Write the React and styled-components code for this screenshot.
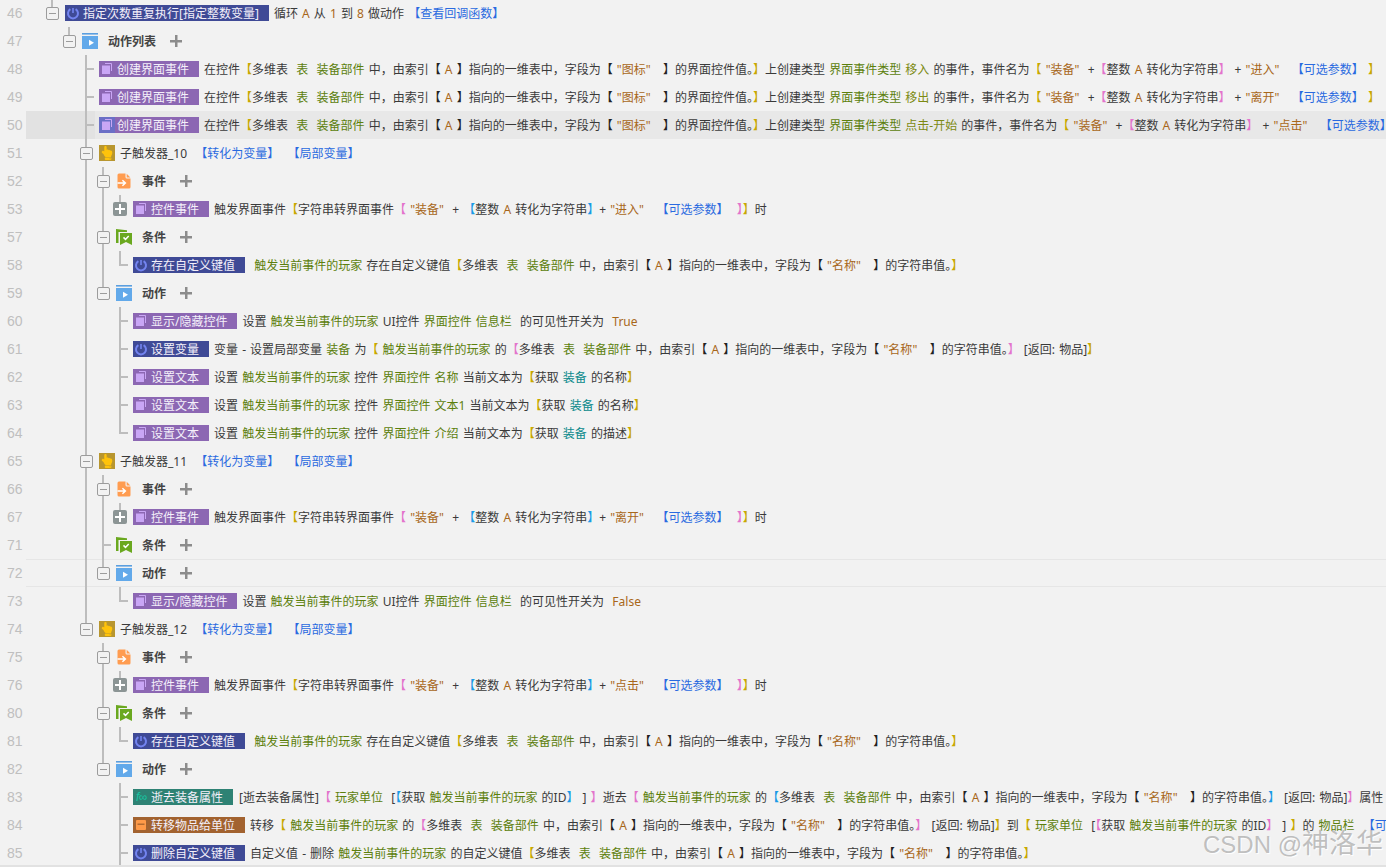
import React from "react";
import styled, { createGlobalStyle } from "styled-components";
import { FaHandPointUp } from "react-icons/fa";

const GlobalStyle = createGlobalStyle`
  html, body {
    margin: 0;
    padding: 0;
    background: #f2f2f2;
    overflow: hidden;
  }
`;

const EVENT_NAME = { in: "进入", out: "离开", click: "点击" };

const App = () => {
  return (
    <Page>
      <GlobalStyle />
      <List>
        {ROWS.map((row) => (
          <Row key={row.n}>
            <LineNo>{row.n}</LineNo>
            <Body $selected={row.selected} $lined={row.lined}>
              <Lead $selected={row.selected}>
                {row.tree.split("").map((type, i) => (
                  <TreeCell key={i} type={type} />
                ))}
              </Lead>
              <Content>{row.node}</Content>
            </Body>
          </Row>
        ))}
      </List>
      <ScrollStrip />
      <Watermark>
        CSDN @<WatermarkName>神洛华</WatermarkName>
      </Watermark>
    </Page>
  );
};

export default App;

const TreeCell = ({ type }) => (
  <Cell $type={type}>
    {(type === "m" || type === "n") && <Minus />}
    {type === "p" && <PlusBox />}
  </Cell>
);

const PurpleIcon = () => (
  <svg width="16" height="16" viewBox="0 0 16 16">
    <path d="M6 2.5h6.5V10" fill="none" stroke="#c9a6f5" strokeWidth="1" />
    <rect x="3" y="4.5" width="8" height="8.5" fill="#c9a6f5" />
  </svg>
);

const BlueIcon = () => (
  <svg width="16" height="16" viewBox="0 0 16 16">
    <path d="M5.4 4.2a5 5 0 1 0 5.2 0" fill="none" stroke="#7384f0" strokeWidth="2" />
    <path d="M8 3v5" stroke="#7384f0" strokeWidth="1.6" />
  </svg>
);

const BoxIcon = () => (
  <svg width="16" height="16" viewBox="0 0 16 16">
    <rect x="3" y="3" width="10" height="10" rx="1" fill="#ff9a48" />
    <path d="M4.5 7.2h7" stroke="#a0602c" strokeWidth="1.2" />
  </svg>
);

const DocIcon = () => (
  <svg width="16" height="16" viewBox="0 0 16 16">
    <path d="M3 .5h6.5V4a1.5 1.5 0 0 0 1.5 1.5h3.5V14a1.5 1.5 0 0 1-1.5 1.5H3A1.5 1.5 0 0 1 1.5 14V2A1.5 1.5 0 0 1 3 .5z" fill="#ff9c50" />
    <path d="M10.7.8l3.6 3.6h-3.6z" fill="#ff9c50" />
    <path d="M1.5 10h7.2M6.4 7.2L9.4 10l-3 2.8" fill="none" stroke="#fff" strokeWidth="1.5" />
  </svg>
);

const FlagIcon = () => (
  <svg width="16" height="16" viewBox="0 0 16 16">
    <path d="M0 0l11 1.2V3H2.5v11H0z" fill="#6aa81f" />
    <path d="M4 4h12v12l-6-3-6 3z" fill="#6aa81f" />
    <path d="M7.5 8.4l2 2 3.2-3.4" fill="none" stroke="#fff" strokeWidth="1.5" />
  </svg>
);

const PlayIcon = () => (
  <svg width="16" height="16" viewBox="0 0 16 16">
    <rect x="0" y="0" width="16" height="1.6" fill="#5b9fe0" />
    <rect x="0" y="3" width="16" height="13" fill="#62a9ea" />
    <path d="M7 6.8l5 3-5 3z" fill="#fff" />
  </svg>
);

const HandIcon = () => (
  <HandBox>
    <FaHandPointUp size={14} color="#ffc30b" />
  </HandBox>
);

const TAG_COLORS = {
  purple: "#8c67b3",
  blue: "#3f4a96",
  teal: "#2e8274",
  brown: "#a2622f",
};

const Tag = ({ color, children, active }) => (
  <TagBox $color={color}>
    <TagIcon $active={active}>
      {color === "purple" && <PurpleIcon />}
      {color === "blue" && <BlueIcon />}
      {color === "teal" && <FxGlyph>f∞</FxGlyph>}
      {color === "brown" && <BoxIcon />}
    </TagIcon>
    {children}
  </TagBox>
);

const Heading = ({ icon, children }) => (
  <>
    {icon}
    <HeadLabel>{children}</HeadLabel>
    <AddButton />
  </>
);

const Trigger = ({ children }) => (
  <>
    <HandIcon />
    <Text>
      {children}  <Link>【转化为变量】</Link>  <Link>【局部变量】</Link>
    </Text>
  </>
);

const TableField = ({ name, value }) => (
  <>
    多维表  <Green>表</Green>  <Green>装备部件</Green> 中，由索引<Dark>【</Dark> <Str>A</Str> <Dark>】</Dark>指向的一维表中，字段为<Dark>【</Dark> <Str>"{name}"</Str>   <Dark>】</Dark>的{value}。
  </>
);

const IntToStr = () => (
  <>
    <Cyan>【</Cyan>整数 <Str>A</Str> 转化为字符串<Cyan>】</Cyan>
  </>
);

const CreateEvent = ({ type, name, active }) => (
  <>
    <Tag color="purple" active={active}>创建界面事件</Tag>
    <Text>
      在控件<Yellow>【</Yellow><TableField name="图标" value="界面控件值" /><Yellow>】</Yellow>上创建类型 <Green>界面事件类型</Green> <Olive>{type}</Olive> 的事件，事件名为<Yellow>【</Yellow> <Str>"装备"</Str>  +<Pink>【</Pink>整数 <Str>A</Str> 转化为字符串<Pink>】</Pink> + <Str>"{name}"</Str>   <Link>【可选参数】</Link> <Yellow>】</Yellow>
    </Text>
  </>
);

const FireEvent = ({ name }) => (
  <>
    <Tag color="purple">控件事件</Tag>
    <Text>
      触发界面事件<Yellow>【</Yellow>字符串转界面事件<Pink>【</Pink> <Str>"装备"</Str>  + <IntToStr />+ <Str>"{name}"</Str>   <Link>【可选参数】</Link>  <Pink>】</Pink><Yellow>】</Yellow>时
    </Text>
  </>
);

const HasKey = () => (
  <>
    <Tag color="blue">存在自定义键值</Tag>
    <Text>
      {" "}<Green>触发当前事件的玩家</Green> 存在自定义键值<Yellow>【</Yellow><TableField name="名称" value="字符串值" /><Yellow>】</Yellow>
    </Text>
  </>
);

const ShowHide = ({ value }) => (
  <>
    <Tag color="purple">显示/隐藏控件</Tag>
    <Text>
      设置 <Green>触发当前事件的玩家</Green> UI控件 <Green>界面控件</Green> <Green>信息栏</Green>  的可见性开关为  <Str>{value}</Str>
    </Text>
  </>
);

const SetText = ({ part, what }) => (
  <>
    <Tag color="purple">设置文本</Tag>
    <Text>
      设置 <Green>触发当前事件的玩家</Green> 控件 <Green>界面控件</Green> <Green>{part}</Green> 当前文本为<Yellow>【</Yellow>获取 <Teal>装备</Teal> 的{what}<Yellow>】</Yellow>
    </Text>
  </>
);

// Styled Components
const FONT = `"Noto Sans", "Noto Sans CJK SC", sans-serif`;
const LINE = "#bdbdbd";

const Page = styled.div`
  position: relative;
  width: 100%;
  height: 100vh;
  overflow: hidden;
  background: #f2f2f2;
  font-family: ${FONT};
  font-size: 12px;
  color: #3a3a3a;
`;

const List = styled.div`
  display: flex;
  flex-direction: column;
  margin-top: -1px;
`;

const Row = styled.div`
  display: flex;
  height: 28px;
  flex: none;
`;

const LineNo = styled.div`
  width: 19px;
  padding-left: 7px;
  flex: none;
  line-height: 28px;
  font-family: "Liberation Sans", sans-serif;
  font-size: 14px;
  color: #bfbfbf;
`;

const Body = styled.div`
  display: flex;
  flex: 1;
  min-width: 0;
  background: ${(p) => (p.$selected ? "#e8e8e8" : "transparent")};
  box-shadow: ${(p) => (p.$lined ? "inset 0 1px #e6e6e6, inset 0 -1px #e6e6e6" : "none")};
`;

const Lead = styled.div`
  display: flex;
  flex: none;
  padding-left: 18px;
  background: ${(p) => (p.$selected ? "#e2e2e2" : "transparent")};
`;

const vertical = (size, pos = "0") =>
  `linear-gradient(${LINE}, ${LINE}) no-repeat 7px ${pos} / 2px ${size}`;

const CELL_LINES = {
  "|": vertical("100%"),
  T: `${vertical("100%")}, linear-gradient(${LINE}, ${LINE}) no-repeat 9px 13px / 7px 2px`,
  L: `${vertical("15px")}, linear-gradient(${LINE}, ${LINE}) no-repeat 9px 13px / 7px 2px`,
  m: vertical("100%"),
  n: vertical("14px"),
  p: vertical("14px"),
};

const Cell = styled.div`
  display: flex;
  align-items: center;
  width: 17px;
  height: 28px;
  flex: none;
  background: ${(p) => CELL_LINES[p.$type] || "none"};
`;

const Minus = styled.span`
  display: block;
  box-sizing: border-box;
  width: 13px;
  height: 13px;
  margin-left: 2px;
  border: 1px solid #9c9c9c;
  border-radius: 2px;
  background: linear-gradient(#9c9c9c, #9c9c9c) no-repeat center / 7px 1px, #f2f2f2;
`;

const PlusBox = styled.span`
  display: block;
  width: 14px;
  height: 14px;
  margin-left: 1px;
  border-radius: 2px;
  background:
    linear-gradient(#fff, #fff) no-repeat center / 10px 2px,
    linear-gradient(#fff, #fff) no-repeat center / 2px 10px,
    #8c9595;
`;

const Content = styled.div`
  display: flex;
  align-items: center;
  flex: 1;
  min-width: 0;
  padding-left: 4px;
  overflow: hidden;
  white-space: pre;
  word-spacing: 1px;
`;

const TagBox = styled.div`
  display: flex;
  align-items: flex-start;
  flex: none;
  height: 16px;
  padding-right: 10px;
  background: ${(p) => TAG_COLORS[p.$color]};
  color: #f4f0fa;
  line-height: 18px;
`;

const TagIcon = styled.span`
  display: flex;
  align-items: center;
  justify-content: center;
  width: 16px;
  height: 16px;
  margin-right: 2px;
  overflow: hidden;
  background: ${(p) => (p.$active ? "#6b6fc6" : "transparent")};
`;

const FxGlyph = styled.span`
  font-family: "Liberation Sans", "DejaVu Sans", sans-serif;
  font-size: 12px;
  font-style: italic;
  line-height: 16px;
  letter-spacing: -1px;
  color: #17c4a2;
`;

const Text = styled.div`
  flex: none;
  margin-left: ${(p) => p.$gap || "5px"};
  padding-top: 2px;
  line-height: 16px;
`;

const HeadLabel = styled.span`
  margin-left: 10px;
  padding-top: 2px;
  font-weight: 700;
  color: #444;
  line-height: 16px;
`;

const AddButton = styled.span`
  display: block;
  width: 12px;
  height: 12px;
  margin-left: 14px;
  background:
    linear-gradient(#8c8c8c, #8c8c8c) no-repeat center / 12px 2.5px,
    linear-gradient(#8c8c8c, #8c8c8c) no-repeat center / 2.5px 12px;
`;

const HandBox = styled.span`
  display: flex;
  align-items: center;
  justify-content: center;
  width: 16px;
  height: 16px;
  background: #b8962f;
`;

const Green = styled.span`
  color: #5c7f0c;
`;

const Olive = styled.span`
  color: #7c8a12;
`;

const Teal = styled.span`
  color: #0a8a8c;
`;

const Str = styled.span`
  color: #a8671a;
`;

const Link = styled.span`
  color: #2a6ae0;
`;

const Yellow = styled.span`
  color: #c8a800;
`;

const Pink = styled.span`
  color: #e374cc;
`;

const Cyan = styled.span`
  color: #1a9be6;
`;

const Dark = styled.span`
  color: #222;
`;

const ScrollStrip = styled.div`
  position: absolute;
  left: 0;
  right: 0;
  bottom: 0;
  height: 2px;
  background: #e2e2e2;
`;

const Watermark = styled.div`
  position: absolute;
  right: 3px;
  bottom: 5px;
  font-family: "Liberation Sans", sans-serif;
  font-size: 24px;
  line-height: 34px;
  color: rgba(165, 165, 165, 0.7);
  text-shadow: 1px 1px 1px #fff;
  white-space: pre;
`;

const WatermarkName = styled.span`
  font-family: "Noto Sans CJK SC", sans-serif;
  font-size: 27px;
`;

const ROWS = [
  {
    n: 46,
    tree: "n",
    node: (
      <>
        <Tag color="blue">指定次数重复执行[指定整数变量]</Tag>
        <Text>
          循环 <Str>A</Str> 从 <Str>1</Str> 到 <Str>8</Str> 做动作 <Link>【查看回调函数】</Link>
        </Text>
      </>
    ),
  },
  { n: 47, tree: " n", node: <Heading icon={<PlayIcon />}>动作列表</Heading> },
  { n: 48, tree: "  T", node: <CreateEvent type="移入" name={EVENT_NAME.in} /> },
  { n: 49, tree: "  T", node: <CreateEvent type="移出" name={EVENT_NAME.out} /> },
  { n: 50, tree: "  T", selected: true, node: <CreateEvent type="点击-开始" name={EVENT_NAME.click} active /> },
  { n: 51, tree: "  m", node: <Trigger>子触发器_10</Trigger> },
  { n: 52, tree: "  |m", node: <Heading icon={<DocIcon />}>事件</Heading> },
  { n: 53, tree: "  ||p", node: <FireEvent name={EVENT_NAME.in} /> },
  { n: 57, tree: "  |m", node: <Heading icon={<FlagIcon />}>条件</Heading> },
  { n: 58, tree: "  ||L", node: <HasKey /> },
  { n: 59, tree: "  |n", node: <Heading icon={<PlayIcon />}>动作</Heading> },
  { n: 60, tree: "  | T", node: <ShowHide value="True" /> },
  {
    n: 61,
    tree: "  | T",
    node: (
      <>
        <Tag color="blue">设置变量</Tag>
        <Text>
          变量 - 设置局部变量 <Green>装备</Green> 为<Yellow>【</Yellow> <Green>触发当前事件的玩家</Green> 的<Pink>【</Pink><TableField name="名称" value="字符串值" /><Pink>】</Pink> [返回: 物品]<Yellow>】</Yellow>
        </Text>
      </>
    ),
  },
  { n: 62, tree: "  | T", node: <SetText part="名称" what="名称" /> },
  { n: 63, tree: "  | T", node: <SetText part="文本1" what="名称" /> },
  { n: 64, tree: "  | L", node: <SetText part="介绍" what="描述" /> },
  { n: 65, tree: "  m", node: <Trigger>子触发器_11</Trigger> },
  { n: 66, tree: "  |m", node: <Heading icon={<DocIcon />}>事件</Heading> },
  { n: 67, tree: "  ||p", node: <FireEvent name={EVENT_NAME.out} /> },
  { n: 71, tree: "  |T", node: <Heading icon={<FlagIcon />}>条件</Heading> },
  { n: 72, tree: "  |n", lined: true, node: <Heading icon={<PlayIcon />}>动作</Heading> },
  { n: 73, tree: "  | L", node: <ShowHide value="False" /> },
  { n: 74, tree: "  n", node: <Trigger>子触发器_12</Trigger> },
  { n: 75, tree: "   m", node: <Heading icon={<DocIcon />}>事件</Heading> },
  { n: 76, tree: "   |p", node: <FireEvent name={EVENT_NAME.click} /> },
  { n: 80, tree: "   m", node: <Heading icon={<FlagIcon />}>条件</Heading> },
  { n: 81, tree: "   |L", node: <HasKey /> },
  { n: 82, tree: "   n", node: <Heading icon={<PlayIcon />}>动作</Heading> },
  {
    n: 83,
    tree: "    T",
    node: (
      <>
        <Tag color="teal">逝去装备属性</Tag>
        <Text $gap="6px">
          [逝去装备属性]<Pink>【</Pink> <Green>玩家单位</Green>  [<Cyan>【</Cyan>获取 <Green>触发当前事件的玩家</Green> 的ID<Cyan>】</Cyan> ] <Pink>】</Pink>逝去<Pink>【</Pink> <Green>触发当前事件的玩家</Green> 的<Cyan>【</Cyan><TableField name="名称" value="字符串值" /><Cyan>】</Cyan> [返回: 物品]<Pink>】</Pink>属性
        </Text>
      </>
    ),
  },
  {
    n: 84,
    tree: "    T",
    node: (
      <>
        <Tag color="brown">转移物品给单位</Tag>
        <Text>
          转移<Yellow>【</Yellow> <Green>触发当前事件的玩家</Green> 的<Pink>【</Pink><TableField name="名称" value="字符串值" /><Pink>】</Pink> [返回: 物品]<Yellow>】</Yellow>到<Yellow>【</Yellow> <Green>玩家单位</Green>  [<Pink>【</Pink>获取 <Green>触发当前事件的玩家</Green> 的ID<Pink>】</Pink> ] <Yellow>】</Yellow>的 <Green>物品栏</Green>  <Link>【可选参数】</Link>
        </Text>
      </>
    ),
  },
  {
    n: 85,
    tree: "    T",
    node: (
      <>
        <Tag color="blue">删除自定义键值</Tag>
        <Text>
          自定义值 - 删除 <Green>触发当前事件的玩家</Green> 的自定义键值<Yellow>【</Yellow><TableField name="名称" value="字符串值" /><Yellow>】</Yellow>
        </Text>
      </>
    ),
  },
];
